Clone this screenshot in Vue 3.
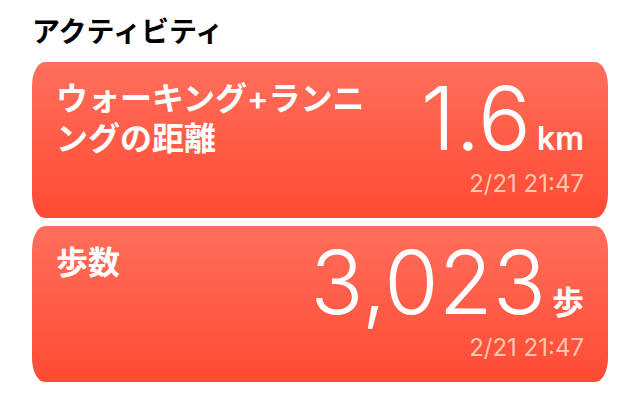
<script setup>
const cards = [
  { name: 'ウォーキング+ランニングの距離', value: '1.6', unit: 'km', time: '2/21 21:47' },
  { name: '歩数', value: '3,023', unit: '歩', time: '2/21 21:47' },
]
</script>

<template>
  <main class="page">
    <h1 class="heading">アクティビティ</h1>
    <section class="cards">
      <article v-for="card in cards" :key="card.name" class="card">
        <h2 class="name">{{ card.name }}</h2>
        <div class="reading">
          <p class="amount">
            <span class="value">{{ card.value }}</span>
            <span class="unit">{{ card.unit }}</span>
          </p>
          <time class="time">{{ card.time }}</time>
        </div>
      </article>
    </section>
  </main>
</template>

<style>
body {
  background: #fff;
}
</style>

<style scoped>
.page {
  padding: 13px 32px 30px;
  font-family: Inter, "Noto Sans CJK JP", sans-serif;
}
.heading {
  margin: 0 0 11px;
  font-size: 28px;
  line-height: 38px;
  font-weight: 600;
  color: #000;
}
.cards {
  display: grid;
  gap: 8px;
}
.card {
  display: flex;
  justify-content: space-between;
  box-sizing: border-box;
  min-height: 156px;
  padding: 16px 24px;
  border-radius: 13px / 24px;
  background: linear-gradient(#ff6f5c, #ff4a33);
  color: #fff;
}
.name {
  flex: 1;
  max-width: 312px;
  margin: 0;
  padding-top: 1px;
  font-size: 32px;
  line-height: 40px;
  font-weight: 600;
}
.reading {
  display: flex;
  flex-direction: column;
  align-items: flex-end;
}
.amount {
  display: flex;
  align-items: baseline;
  gap: 6px;
  margin: 0;
}
.value {
  font-size: 88px;
  line-height: 80px;
  font-weight: 300;
}
.unit {
  font-size: 32px;
  line-height: 32px;
  font-weight: 600;
}
.time {
  margin-top: 10px;
  font-size: 24px;
  line-height: 32px;
  color: #ffc6b0;
}
</style>
